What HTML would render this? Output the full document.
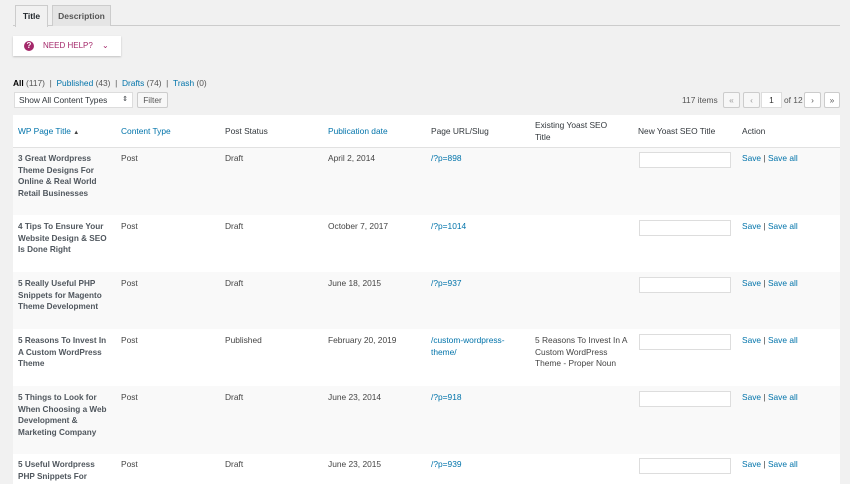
<!DOCTYPE html>
<html><head><style>
*{margin:0;padding:0;box-sizing:border-box}
body{width:850px;height:477px;overflow:hidden;background:#f1f1f1;font-family:"Liberation Sans",sans-serif;font-size:8.4px;color:#444;position:relative}
.a{position:absolute}
a,.l{color:#0073aa;text-decoration:none}
.tab{position:absolute;top:5px;height:21px;border:1px solid #ccc;border-bottom:none;font-weight:bold;font-size:8.5px;line-height:20px;text-align:center}
.row{position:absolute;left:13px;width:827px}
.c{position:absolute;line-height:11.5px;white-space:nowrap}
.t{font-weight:bold;color:#50575e;font-size:8.2px}
.in{position:absolute;left:626px;width:92px;height:16px;background:#fff;border:1px solid #ddd}
.btn{position:absolute;height:16px;border:1px solid #ccc;background:#f7f7f7;color:#999;text-align:center;line-height:14px;border-radius:2px}
</style></head><body>
<div class="a" style="left:13px;top:25px;width:827px;height:1px;background:#ccc"></div>
<div class="tab" style="left:15px;width:33px;background:#f1f1f1;color:#23282d;height:22px">Title</div>
<div class="tab" style="left:52px;width:59px;background:#e5e5e5;color:#555">Description</div>
<div class="a" style="left:13px;top:36px;width:108px;height:20px;background:#fff;box-shadow:0 1px 2px rgba(0,0,0,.2);color:#a4286a;font-size:8px;line-height:20px">
<span class="a" style="left:11px;top:5px;width:10px;height:10px;border-radius:50%;background:#a4286a;color:#fff;font-weight:bold;font-size:8px;line-height:10px;text-align:center">?</span>
<span class="a" style="left:30px">NEED HELP?</span><span class="a" style="left:89px;top:0;font-size:8px">&#8964;</span></div>
<div class="a" style="left:13px;top:78px;color:#555"><b style="color:#000">All</b> (117) &nbsp;| &nbsp;<a>Published</a> (43) &nbsp;| &nbsp;<a>Drafts</a> (74) &nbsp;| &nbsp;<a>Trash</a> (0)</div>
<div class="a" style="left:14px;top:92px;width:119px;height:16px;background:#fff;border:1px solid #ddd;color:#32373c;line-height:14px;padding-left:4px">Show All Content Types<span class="a" style="right:4px;top:0;font-size:7px">&#8661;</span></div>
<div class="btn" style="left:137px;top:92px;width:31px;color:#555">Filter</div>
<div class="a" style="left:682px;top:95px;color:#555">117 items</div>
<div class="btn" style="left:723px;top:92px;width:17px">«</div>
<div class="btn" style="left:743px;top:92px;width:17px">‹</div>
<div class="a" style="left:761px;top:92px;width:21px;height:16px;background:#fff;border:1px solid #ddd;text-align:center;line-height:14px;color:#333">1</div>
<div class="a" style="left:784px;top:95px;color:#555">of 12</div>
<div class="btn" style="left:804px;top:92px;width:17px;color:#555;background:#fff">›</div>
<div class="btn" style="left:824px;top:92px;width:16px;color:#555;background:#fff">»</div>
<div class="row" style="top:115px;height:33px;background:#fff;border-bottom:1px solid #e1e1e1">
<div class="c l" style="left:5px;top:11px">WP Page Title <span style="color:#444;font-size:6px">▲</span></div>
<div class="c l" style="left:108px;top:11px">Content Type</div>
<div class="c" style="left:212px;top:11px;color:#32373c">Post Status</div>
<div class="c l" style="left:315px;top:11px">Publication date</div>
<div class="c" style="left:418px;top:11px;color:#32373c">Page URL/Slug</div>
<div class="c" style="left:522px;top:5px;color:#32373c">Existing Yoast SEO<br>Title</div>
<div class="c" style="left:625px;top:11px;color:#32373c">New Yoast SEO Title</div>
<div class="c" style="left:729px;top:11px;color:#32373c">Action</div>
</div>

<div class="row" style="top:148px;height:67px;background:#f9f9f9">
<div class="c t" style="left:5px;top:5px">3 Great Wordpress<br>Theme Designs For<br>Online &amp; Real World<br>Retail Businesses</div>
<div class="c" style="left:108px;top:5px">Post</div><div class="c" style="left:212px;top:5px">Draft</div><div class="c" style="left:315px;top:5px">April 2, 2014</div><div class="c l" style="left:418px;top:5px">/?p=898</div>
<div class="in" style="top:4px"></div><div class="c" style="left:729px;top:5px"><a>Save</a> | <a>Save all</a></div></div>

<div class="row" style="top:215px;height:57px;background:#fff">
<div class="c t" style="left:5px;top:6px">4 Tips To Ensure Your<br>Website Design &amp; SEO<br>Is Done Right</div>
<div class="c" style="left:108px;top:6px">Post</div><div class="c" style="left:212px;top:6px">Draft</div><div class="c" style="left:315px;top:6px">October 7, 2017</div><div class="c l" style="left:418px;top:6px">/?p=1014</div>
<div class="in" style="top:5px"></div><div class="c" style="left:729px;top:6px"><a>Save</a> | <a>Save all</a></div></div>

<div class="row" style="top:272px;height:57px;background:#f9f9f9">
<div class="c t" style="left:5px;top:6px">5 Really Useful PHP<br>Snippets for Magento<br>Theme Development</div>
<div class="c" style="left:108px;top:6px">Post</div><div class="c" style="left:212px;top:6px">Draft</div><div class="c" style="left:315px;top:6px">June 18, 2015</div><div class="c l" style="left:418px;top:6px">/?p=937</div>
<div class="in" style="top:5px"></div><div class="c" style="left:729px;top:6px"><a>Save</a> | <a>Save all</a></div></div>

<div class="row" style="top:329px;height:57px;background:#fff">
<div class="c t" style="left:5px;top:6px">5 Reasons To Invest In<br>A Custom WordPress<br>Theme</div>
<div class="c" style="left:108px;top:6px">Post</div><div class="c" style="left:212px;top:6px">Published</div><div class="c" style="left:315px;top:6px">February 20, 2019</div><div class="c l" style="left:418px;top:6px">/custom-wordpress-<br>theme/</div>
<div class="c" style="left:522px;top:6px">5 Reasons To Invest In A<br>Custom WordPress<br>Theme - Proper Noun</div>
<div class="in" style="top:5px"></div><div class="c" style="left:729px;top:6px"><a>Save</a> | <a>Save all</a></div></div>

<div class="row" style="top:386px;height:68px;background:#f9f9f9">
<div class="c t" style="left:5px;top:6px">5 Things to Look for<br>When Choosing a Web<br>Development &amp;<br>Marketing Company</div>
<div class="c" style="left:108px;top:6px">Post</div><div class="c" style="left:212px;top:6px">Draft</div><div class="c" style="left:315px;top:6px">June 23, 2014</div><div class="c l" style="left:418px;top:6px">/?p=918</div>
<div class="in" style="top:5px"></div><div class="c" style="left:729px;top:6px"><a>Save</a> | <a>Save all</a></div></div>

<div class="row" style="top:454px;height:30px;background:#fff">
<div class="c t" style="left:5px;top:5px">5 Useful Wordpress<br>PHP Snippets For</div>
<div class="c" style="left:108px;top:5px">Post</div><div class="c" style="left:212px;top:5px">Draft</div><div class="c" style="left:315px;top:5px">June 23, 2015</div><div class="c l" style="left:418px;top:5px">/?p=939</div>
<div class="in" style="top:4px"></div><div class="c" style="left:729px;top:5px"><a>Save</a> | <a>Save all</a></div></div>
</body></html>
